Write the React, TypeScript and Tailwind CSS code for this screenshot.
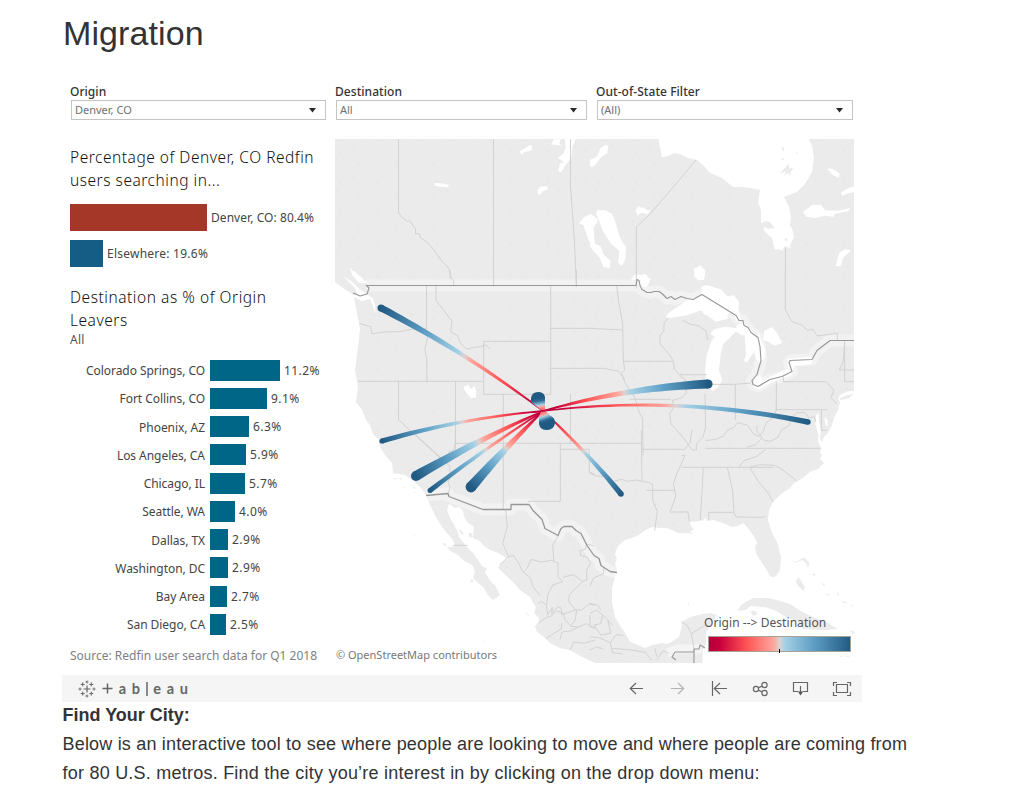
import type { ReactNode } from "react";

const cities = [
  { name: "Colorado Springs, CO", value: "11.2%", width: 70 },
  { name: "Fort Collins, CO", value: "9.1%", width: 57 },
  { name: "Phoenix, AZ", value: "6.3%", width: 39 },
  { name: "Los Angeles, CA", value: "5.9%", width: 36 },
  { name: "Chicago, IL", value: "5.7%", width: 35 },
  { name: "Seattle, WA", value: "4.0%", width: 25 },
  { name: "Dallas, TX", value: "2.9%", width: 18 },
  { name: "Washington, DC", value: "2.9%", width: 18 },
  { name: "Bay Area", value: "2.7%", width: 17 },
  { name: "San Diego, CA", value: "2.5%", width: 16 },
];

function Filter({ label, value, box }: { label: string; value: string; box: string }) {
  return (
    <div className={box}>
      <div className="h-4 -ml-px text-[12px] leading-4 font-medium tracking-[0.05px] text-[#333] whitespace-nowrap">{label}</div>
      <div className="flex h-5 items-center justify-between border border-[#c4c4c4] bg-white pl-[3px] pr-[9px]">
        <span className="text-[11px] leading-4 text-[#707070]">{value}</span>
        <svg width="7" height="5" viewBox="0 0 7 5"><path d="M0 0h7L3.500 4.500z" fill="#2b2b2b" /></svg>
      </div>
    </div>
  );
}

type Flow = { to: [number, number]; via: [number, number]; r: number };

const origin: [number, number] = [543, 411];

const flows: Flow[] = [
  { to: [381, 308], via: [464, 351], r: 3.5 },
  { to: [382, 441], via: [462, 418], r: 2.6 },
  { to: [416, 476], via: [478, 440], r: 5 },
  { to: [430, 490.5], via: [486, 448], r: 2.5 },
  { to: [471, 487], via: [507, 446], r: 5.4 },
  { to: [621, 494], via: [584, 449], r: 2.8 },
  { to: [808, 422], via: [675, 395], r: 2.7 },
  { to: [708, 384], via: [625, 388], r: 4.6 },
];

// Outline of a band that widens along a quadratic curve from the origin.
function taper({ to, via, r }: Flow) {
  const left: string[] = [];
  const right: string[] = [];
  for (let i = 0; i <= 24; i++) {
    const t = i / 24;
    const u = 1 - t;
    const x = u * u * origin[0] + 2 * u * t * via[0] + t * t * to[0];
    const y = u * u * origin[1] + 2 * u * t * via[1] + t * t * to[1];
    const dx = 2 * u * (via[0] - origin[0]) + 2 * t * (to[0] - via[0]);
    const dy = 2 * u * (via[1] - origin[1]) + 2 * t * (to[1] - via[1]);
    const n = Math.hypot(dx, dy);
    const w = 0.7 + (r - 0.7) * t;
    left.push(`${(x - (dy / n) * w).toFixed(2)},${(y + (dx / n) * w).toFixed(2)}`);
    right.unshift(`${(x + (dy / n) * w).toFixed(2)},${(y - (dx / n) * w).toFixed(2)}`);
  }
  return `M${left.join("L")}L${right.join("L")}Z`;
}

function Stops() {
  return (
    <>
      <stop offset="0" stopColor="#b3003c" />
      <stop offset=".08" stopColor="#c8003c" />
      <stop offset=".27" stopColor="#ff5555" />
      <stop offset=".46" stopColor="#fda79d" />
      <stop offset=".5" stopColor="#dcd3d3" />
      <stop offset=".54" stopColor="#a3d0e4" />
      <stop offset=".75" stopColor="#5b9cc3" />
      <stop offset="1" stopColor="#205a83" />
    </>
  );
}

// Each map tile carries its own grid at three units per pixel.
function Tile({ x, y, children }: { x: number; y: number; children: ReactNode }) {
  return <g transform={`translate(${x} ${y}) scale(.33333)`}>{children}</g>;
}

function Water() {
  return (
    <g fill="#fff">
      <path d="M335 279L338 282 347 288 355 294 354 299 355 303 359 323 360 330 358 347 355 370 358 387 356 402 362 410 366 420 370 425 373 434 379 440 380 447 385 455 392 463 393 473 399 474 405 475 412 480 420 487 426 495 430 505 436 517 442 527 447 533 453 540 455 546 450 547 447 548 452 552 458 555 464 561 472 565 475 571 473 578 478 583 483 587 488 595 493 600 500 595 495 585 492 583 485 573 487 568 483 567 478 560 473 553 466 546 463 542 459 537 457 530 453 523 450 518 447 510 449 504 455 508 459 507 463 510 464 516 467 522 474 527 473 533 473 538 480 541 484 546 490 550 498 553 508 559 500 564 498 568 513 582 520 590 530 597 533 603 536 607 534 613 539 618 538 623 535 626 537 632 545 638 550 643 560 648 570 650 580 656 595 663V666H333z" />
      <path d="M856 391L848 391 840 395 838 399 840 402 838 410 834 418 832 425 828 433 824 437 822 442 818 434 818 442 821 448 820 453 822 455 820 459 824 463 818 469 810 472 804 477 800 480 794 483 790 488 781 494 773 502 769 510 768 520 772 533 776 540 778 545 781 557 780 570 776 576 773 577 770 576 765 567 758 557 756 553 755 547 757 543 755 538 748 528 743 523 738 526 732 527 723 523 713 520 707 521 705 517 704 520 700 521 690 522 691 526 694 529 690 532 694 534 686 533 678 533 672 530 667 528 660 528 653 527 647 529 637 536 625 540 619 545 617 548 615 555 617 558 615 564 617 568 615 577 612 588 612 603 615 617 619 624 623 630 628 638 630 642 638 645 645 648 652 645 662 643 667 644 673 641 679 637 681 630 682 622 690 617 703 614 710 613 717 615 712 622 709 628 706 633 706 643 703 650 702 666H856z" />
      <path d="M658 137L660 147 662 157 668 156 674 153 680 154 688 158 697 160 703 165 710 173 722 178 733 187 742 187 751 188 760 190 758 203 761 210 761 221 765 232 772 238 775 250 779 249 782 251 785 246 790 248 791 250 790 245 794 237 792 228 790 226 791 217 789 207 784 197 797 192 805 184 812 172 814 157 812 146 808 137z" />
      <Tile x={330} y={80}>
        <path d="M314 309l20 1 20 4 3 8-18-1-24-3zM570 213l15-8 15-10 7 2-3 15-22 5-9 6zM623 330l7-9 21-3 3 10-17 7-8 9-5-3zM663 193l9-15h20l-4 13 8 6-20-3zM704 177h33l-10 25-3 32-20 25-11 18-8-5 5-22 13-3-20-13 16-12 8-18zM747 430l15-19 20-9 13 8v30l-20 4-16-9zM760 430l30 4 5 66-18-16-14-40zM60 565l15 10 22 20 15 15H88l-20-22zM780 253l15-20v22l-12 7z" />
      </Tile>
      <Tile x={590} y={80}>
        <path d="M0 240l20-10 12-26 14-9 9 3-3 20-22 17-14 20-16 2zM22 390l24 1 20 10 12 30 12 42 18 30-2 35-10 20-12-10 4-35-27-24-23-37-12-34-8-15zM0 413l24 2-4 16-20 2zM0 440l10 50 22 8 8 25 22 20-4 22-18-4-10-26-22-24-8-12zM138 388l8-10 8 6 5-3 12 10 12 1-12 10-17-4-12 9-5-14zM311 568l20-12 15 16-4 28h-20l-6-15zM135 585l30-1 20 16h-60zM639 397l26-22 28-1 12 17 40 1 35-8-5 10-40 7-5 9-26-3-27 7-28-4zM712 265l17 2 20 14-2 12-19-7zM753 339l16-12 23-8v17l-22 5-14 7zM737 558l11-40 17-10 19 3-24 22-8 25z" />
      </Tile>
      <Tile x={590} y={270}>
        <path d="M150 15l18-3 12 20-8 16-18 5zM314 4L320 0h26l-4 28-14 3-16-11zM228 140l8-12 60-40 40-12-2-24 14-8 44 14 20 21 20-3 15 20-2 26 10 35-18-8-10-25-14 8 0 15-35 8-25-18-10-4-10-12-40 14-50 9zM365 185l7-7 35-8 30 4 22-8 12 13-13 18-20-13-18 19-20 18-8 30-5 50 10 30-12 20-18 12-18-18-4-40 4-46 16-47 10-12-13-8zM437 168l24-10 41 40 8 80-8-2-10-30-12 18-10 14-8-7 6-17-4-58-14-10zM504 185l22 55-2 25-14 15zM523 183l22-12 14 14 18 34-24 8-18-12-15-5zM487 348l10-28 12-4 10 14 75-34-1-30 60-5 18 2-8 20-50 5-8 28-52 17-46 26zM678 435l8-4 2 28 5 20-2 25-8-16-7-24zM704 440l10 12-1 18-8-8z" />
      </Tile>
      <Tile x={330} y={270}>
        <path d="M401 350l15-5 6 12 12-9 5 15-2 20-14 2-20-24zM20 30l20-12 30 20 22 22 36 25 8 20 0 26-6-20-10-24-26 6-40-24z" />
      </Tile>
    </g>
  );
}

function Islands() {
  return (
    <g fill="#ebebeb">
      <path d="M335 270l8 6 12 12 3 7-4 0-8-5-7-5-5-4z" />
      <Tile x={590} y={80}>
        <path d="M513 432l12-8 15 1 14 20-20 1-20-9zM573 275l15-14 8-10 2 15 13-4-9 14-2 12-6-10-12 10 6-14-16 6zM577 200l6 4-3 11-5-8zM572 237l12-2-5 7zM617 216l6 3-3 4zM583 474l10 3-5 9z" />
      </Tile>
      <Tile x={590} y={430}>
        <path d="M443 543l12-20 33-18 42-2 30 7 40 12 30 20 40 20 45 18 28 17-45 4-60-4-15-22-40-16-22-15-34-12-45-4-16 12zM485 542l14 2 2 10-12 3-6-8zM625 440l8 12 12 20-4 11-16-15-8-12zM605 392l16 2 22-12 15 18-4 14-4-12-12-12-20 7zM668 430l12 4-10 4zM690 455l18 12-6 2zM705 488l18 8-12-1zM740 480l8 15-4 2zM755 512l20 6-14 1zM780 520l10 10-4 1zM510 460l30-5-20 4zM294 519l4 4-3 5zM782 600l18 5-14 8zM748 677h12v3h-12zM768 677h10v3h-10z" />
      </Tile>
      <Tile x={590} y={270}>
        <path d="M747 386l20-9 25-6-16 14-24 5z" />
      </Tile>
      <Tile x={330} y={430}>
        <path d="M190 144l14 2-10 3zM208 143l10 4-8 2zM218 170l10 2-8 1zM246 165l12 10-6 1zM250 184l8 5-4 1zM251 309l4 5-2 6zM338 338l8 3 2 8-8-4zM387 298l14 10-2 6-10-8zM416 310l8-2 4 12-9 3zM586 544l12 12-3 1zM461 632l4 2-2 5zM354 650l3 1-2 2zM420 450l10-2-3 12z" />
      </Tile>
    </g>
  );
}

const border =
  "M366 285.500H636l1-6 2 1 1 5 2 4 5 3 4 0 3-1 5 0 3 2 5 5 4-2 4 3 6-3 6 2 6 1 9-5 34 21 3 5h4l1 5 4 2 3 5 7 5 2 9 1 14-4 14-5 6 1 4 5 2 12-7 12-3 10-5-3-9 1-2 22-1 5-9 13-10h24";
const mexico =
  "M426 495.500l22-2 1 3 34 13h28v-5h18l4 6 9 9 3 9 13 7 3-7 3-2 8 0 4 4 5 3 6 12 7 10 5 3 2 7 9 6 7 1";

function Borders() {
  return (
    <g fill="none" strokeLinejoin="round">
      <g stroke="#fff" strokeOpacity=".38" strokeWidth="12">
        <path d={border} />
        <path d={mexico} />
      </g>
      <path d="M667 653l10-4h25" stroke="#f4f4f4" strokeWidth="9" />
      <g stroke="#d2d2d2" strokeWidth="3">
        <Tile x={330} y={80}>
          <path d="M205.500 177V398l8 12 14 10 5 5 6-4 18 25v15h12l3 12 20 14 14 15 12 16 15 22 18 18 10 14v24M490.500 177V620M721.500 177v140l12 170 6 133" />
        </Tile>
        <Tile x={590} y={80}>
          <path d="M318 240l-74 88-65 75-40 38v184M586.500 505v70" />
        </Tile>
        <Tile x={330} y={270}>
          <path d="M358 0l4 20 8 12 2 14M490.500 0v46M739 0v46M289.500 46v130l3 30-8 32 6 30v66M88 160l34 10 4 22 34-6 50-1 50-10h30M84 334H461M205.500 334v115l130 120M376.500 334V540M461 214v159M461 214H662V373H461M662 46v170M662 175h133M662 295h133M520 373v167M721.500 373v147M376.500 520H795M318 46v45l22 28 20 28 6 4-4 35 20 10 10 24 18 18 20-6 22-2 14-6 12 10 3 1" />
        </Tile>
        <Tile x={590} y={270}>
          <path d="M0 175l97 5M80 46l6 50 12 64 2 110 4 30-10 10 12 30 12 20 14 18 16 50 10 18 1 110M98 274H250M0 295h40l44 8 20 24M250 274l-10-18-30-35v-24l12-14v-24l10-12M278 150l20 12 30 6 20 16 5 26M250 274l4 24 15 18 16 12 4 40-12 14-30 10 4 20-12 20 4 30 36 40 20 28 8 10 12 0 0-18 20-20 8-30-2-100M270 314h80M357 343h80l46-4M436 343v107M120 388h122M559 335v84M580 335h10M559 419H712M580 320v15h128l14 15 10 12-10 20 18 20M764 215v120M764 335h28M748 300h44M694 421v60h18M559 400v20l-10 24-20 14-10 28-12 14-18-10-16-24-30-8-12 14-18 8-12 18-24 10-30 4M500 468l2 18 18 24 20 4 24-12 12-24 20-10 10-24 14-16h24l14 16 14-4 6 16M586 0v120l20 35 30 10 16 16 16-3 14 20 30-4 30-4v20M764 215l-4 60-12 25M345 535H692M470 532l26-8 18-18" />
        </Tile>
        <Tile x={330} y={430}>
          <path d="M258 15l100 92 4 30-8 20 6 14-5 20M376 0v40l-6 22-12 2-2 35M520 40v198M691 40v174M691 58h87v68l17 8M691 214h-98M370 346h44M527 240l5 50-14 50 18 40-26 24M536 380l14-4 14 20 14 28 22 18 10 30 20 24M578 428l14-14 12-26 30 8 30-5 20 8 0 40 14 16-30 10-15 30-3 30M686 315l-18 30 4 52M698 442l32-8 28 20 12-4 0-30 12-20-10-18-20-6-2-14 16-4 4-16 22 6M758 454l-40 40-2 20 20 26 20 0 20-18 19 4M625 520l10-6 14 12 4 28 14-22-2 20 18-22 10 4 2 20 18-6 22-8M625 580l20-15 20-8 15-14 20 6 5 20 18 20 22 2 24-10 26 14M650 625l20-14 24-14 2-18M690 628l6-22 24-3 26-12M720 660l12-24 30 4 33-10M780 555v35l15 5M740 540l-4 30-12 15" />
        </Tile>
        <Tile x={590} y={430}>
          <path d="M0 40h154M154 0l2 155M154 58h130M0 130l20 8 30 2 20 14 24-6 20 6 24-4 40 8 10 6v46l14 34-8 58M169 181h85M284 58l16-20 6-38M284 76l-10 26-14 30-10 30 8 36-18 48h54l4 28M276 112h274M340 112l-9 158M412 112l16 70 4 65H356v22M432 247l6 14 74 1 14-2M479 112l26 42 30 36 14 25M479 112l30-8 44 2 20 10 46 36M448 110l14-18 36-12 30-22M274 76h12M0 470l10-26 30-12 2-18M0 550l20-10 18 15-6 26-20 4 20 30 30-5-8-38M38 555l30 30M0 620l30 4 30 14 8 30 30 4M60 638l20-24 20 2M68 655l48 4 50 8 20 24M0 660l20-10 20 8M200 690l20-28 16 8M274 575l18 12 12 24 50-30M304 611l10 54M200 680l-5-25M0 520l24 6 8 14" />
        </Tile>
      </g>
      <g stroke="#979797" strokeWidth="1.100">
        <path d={border} />
        <path d="M353 293l7 3 7-2 2-6-3-3" />
        <path d={mexico} strokeWidth="1.300" />
        <path d="M675 652h19v11M694 652v-3l5 0 1-4 5 3M675 652l-3 5 4 3" />
      </g>
    </g>
  );
}

function MigrationMap() {
  return (
    <svg className="block" width="519" height="524" viewBox="335 139 519 524">
      <defs>
        <pattern id="grain" width="37" height="31" patternUnits="userSpaceOnUse">
          <rect width="37" height="31" fill="#ebebeb" />
          <path d="M3 5h2M14 2h1M25 9h2M33 18h1M9 17h1M19 22h2M29 27h2M6 28h2M15 12h1" stroke="#e6e6e6" strokeWidth="1.500" />
        </pattern>
        {flows.map((f, i) => (
          <linearGradient key={i} id={`flow${i}`} gradientUnits="userSpaceOnUse" x1={origin[0]} y1={origin[1]} x2={f.to[0]} y2={f.to[1]}>
            <Stops />
          </linearGradient>
        ))}
        <linearGradient id="north" gradientUnits="userSpaceOnUse" x1="543" y1="411" x2="541" y2="398">
          <stop offset="0" stopColor="#ff4455" />
          <stop offset=".35" stopColor="#fda79d" />
          <stop offset=".48" stopColor="#a3d0e4" />
          <stop offset=".8" stopColor="#2f6d98" />
          <stop offset="1" stopColor="#205a83" />
        </linearGradient>
        <linearGradient id="south" gradientUnits="userSpaceOnUse" x1="543" y1="410" x2="547" y2="422">
          <stop offset="0" stopColor="#ff4455" />
          <stop offset=".38" stopColor="#fda79d" />
          <stop offset=".5" stopColor="#a3d0e4" />
          <stop offset=".8" stopColor="#2f6d98" />
          <stop offset="1" stopColor="#205a83" />
        </linearGradient>
      </defs>
      <rect x="335" y="139" width="519" height="524" fill="url(#grain)" />
      <Water />
      <Islands />
      <Borders />
      {flows.map((f, i) => (
        <g key={i} fill={`url(#flow${i})`}>
          <path d={taper(f)} />
          <circle cx={f.to[0]} cy={f.to[1]} r={f.r} />
        </g>
      ))}
      <path d="M541 410h4V397q-1-5-7-5t-7 6v4z" fill="url(#north)" />
      <path d="M541 411l-2 6v7q1 6 8 6t8-7q0-5-4-7l-6-5z" fill="url(#south)" />
      <path d="M532 412.500l11-1.500 12-2.500" fill="none" stroke="#c2093f" strokeWidth="1.500" />
    </svg>
  );
}

function TableauMark() {
  return (
    <svg width="18" height="18" viewBox="0 0 18 18" fill="none" stroke="#666" strokeWidth="1">
      <path d="M9 5.500v7M5.500 9h7" strokeWidth="1.200" />
      <path d="M9 .500v3M7.500 2h3M9 14.500v3M7.500 16h3M2 7.500v3M.500 9h3M16 7.500v3M14.500 9h3" strokeWidth=".900" />
      <path d="M4.700 2.400v4M2.700 4.400h4M13.300 2.400v4M11.300 4.400h4M4.700 11.600v4M2.700 13.600h4M13.300 11.600v4M11.300 13.600h4" />
    </svg>
  );
}

function Toolbar() {
  return (
    <div className="flex h-[27px] w-[800px] items-center bg-[#f5f5f5] pl-4 pr-[10px]">
      <TableauMark />
      <div className="ml-[6px] flex h-5 w-[86px] items-center justify-between font-['Lato'] text-[14.5px] leading-5 font-bold text-[#666]">
        <svg width="11" height="11" viewBox="0 0 11 11"><path d="M5.500 .500v10M.500 5.500h10" stroke="#666" strokeWidth="1.500" /></svg>
        <span>a</span><span>b</span>
        <svg width="2" height="14" viewBox="0 0 2 14"><path d="M1 0v14" stroke="#666" strokeWidth="1.500" /></svg>
        <span>e</span><span>a</span><span>u</span>
      </div>
      <svg width="234" height="20" viewBox="628 679 234 20" fill="none" stroke="#666" strokeWidth="1.200" className="ml-auto -mr-[10px]">
        <path d="M643 688.500h-12.500M636 683l-5.700 5.500 5.700 5.500" />
        <path d="M671 688.500h12.500M678 683l5.700 5.500-5.700 5.500" stroke="#b3b3b3" />
        <path d="M712.500 681v15M727 688.500h-12M720 683l-5.700 5.500 5.700 5.500" />
        <circle cx="756" cy="689" r="2.600" />
        <circle cx="764.500" cy="685" r="2.600" />
        <circle cx="764.500" cy="693" r="2.600" />
        <path d="M758.500 687.800l3.500-1.700M758.500 690.200l3.500 1.700" />
        <path d="M798 691.500h-4.500v-9h14v9H803M800.500 686v7" />
        <path d="M797.800 691.500h5.400l-2.700 4z" fill="#555" stroke="none" />
        <path d="M836.500 684.500h11v8h-11zM837 682.500h-3.500v3.500M847 682.500h3.500v3.500M837 695.500h-3.500V692M847 695.500h3.500V692" />
      </svg>
    </div>
  );
}

export default function App() {
  return (
    <div className="h-[790px] w-[1018px] overflow-hidden bg-white pl-[62px] font-['Liberation_Sans',Arial,sans-serif] text-[#333]">
      <h1 className="pt-[13px] pl-px text-[34px] leading-[40px] tracking-[0.1px] whitespace-nowrap">Migration</h1>
      <div className="h-[622px] w-[800px] pt-[31px] font-['Noto_Sans',sans-serif]">
        <div className="flex pl-[9px]">
          <Filter label="Origin" value="Denver, CO" box="w-[255px]" />
          <Filter label="Destination" value="All" box="ml-[10px] w-[251px]" />
          <Filter label="Out-of-State Filter" value="(All)" box="ml-[10px] w-[256px]" />
        </div>
        <div className="flex pt-[19px]">
          <div className="w-[273px] pl-2">
            <h2 className="pt-[7px] text-[15.5px] leading-[23px] font-light tracking-[0.52px] whitespace-nowrap text-[#111]">Percentage of Denver, CO Redfin<br />users searching in...</h2>
            <div className="mt-3 flex h-[27px] items-center gap-1 text-[12px] tracking-[0.06px] whitespace-nowrap text-[#444]"><div className="h-[27px] w-[137px] bg-[#a53728]" />Denver, CO: 80.4%</div>
            <div className="mt-[9px] flex h-[27px] items-center gap-1 text-[12px] tracking-[0.24px] text-[#444]"><div className="h-[27px] w-[33px] bg-[#165d86]" />Elsewhere: 19.6%</div>
            <h2 className="mt-[19px] text-[15.5px] leading-[23px] font-light tracking-[0.54px] text-[#111]">Destination as % of Origin<br />Leavers</h2>
            <p className="h-4 text-[12px] leading-4 tracking-[0.3px] text-[#555]">All</p>
            <div className="mt-2">
              {cities.map((c) => (
                <div key={c.name} className="flex h-[28.250px] items-center text-[12px] text-[#444]">
                  <span className="w-[135px] pt-[2px] text-right tracking-[-0.05px] whitespace-nowrap">{c.name}</span>
                  <div className="ml-[5px] h-[21px] bg-[#006688]" style={{ width: c.width }} />
                  <span className="ml-1 pt-px tracking-[0.4px]">{c.value}</span>
                </div>
              ))}
            </div>
            <p className="mt-[9px] text-[12px] leading-4 whitespace-nowrap text-[#808080]">Source: Redfin user search data for Q1 2018</p>
          </div>
          <div className="relative h-[524px] w-[519px]">
            <MigrationMap />
            <span className="absolute bottom-0 left-[1px] text-[11px] leading-4 whitespace-nowrap text-[#777]">© OpenStreetMap contributors</span>
            <div className="absolute top-[475px] left-[369px]">
              <div className="text-[12px] leading-[18px] tracking-[0.05px] whitespace-nowrap text-[#555]">Origin --&gt; Destination</div>
              <svg className="mt-1 ml-1 block" width="144" height="18" viewBox="0 0 144 18">
                <defs><linearGradient id="legend"><Stops /></linearGradient></defs>
                <rect x=".500" y=".500" width="142" height="15" fill="url(#legend)" stroke="#a8a294" />
                <path d="M71.500 13v4" stroke="#000" />
              </svg>
            </div>
          </div>
        </div>
      </div>
      <Toolbar />
      <div className="pl-[0.5px] text-[18px] leading-[29px] whitespace-nowrap">
        <h3 className="-mt-px font-bold">Find Your City:</h3>
        <p className="tracking-[0.19px]">Below is an interactive tool to see where people are looking to move and where people are coming from</p>
        <p className="tracking-[0.23px]">for 80 U.S. metros. Find the city you’re interest in by clicking on the drop down menu:</p>
      </div>
    </div>
  );
}
